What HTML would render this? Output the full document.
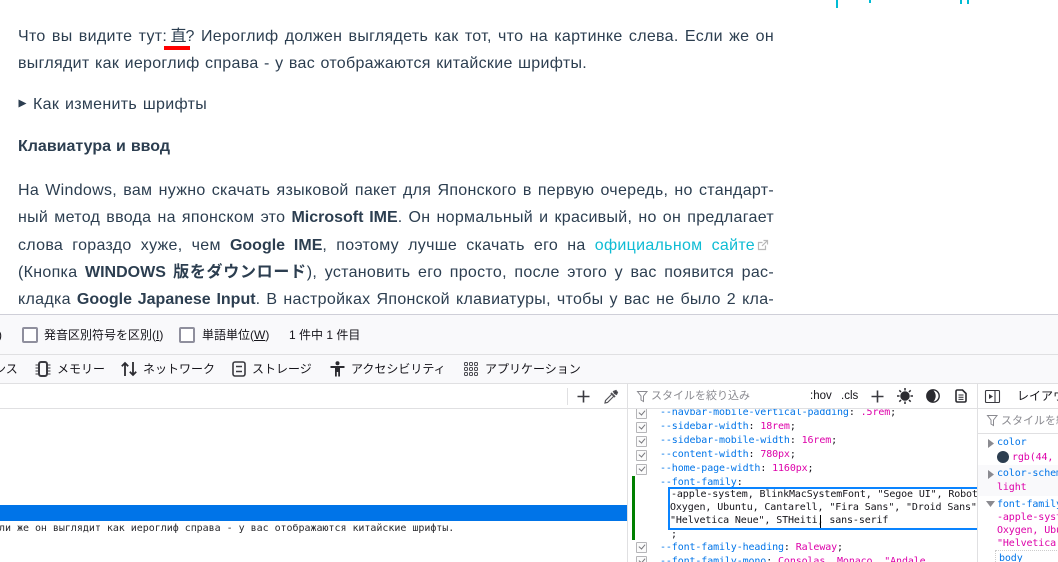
<!DOCTYPE html>
<html lang="ru"><head><meta charset="utf-8"><style>
html,body{margin:0;padding:0;background:#fff}
#p{position:relative;width:1058px;height:562px;overflow:hidden;background:#fff;font-family:"Liberation Sans","Noto Sans CJK JP",sans-serif}
.a{position:absolute;white-space:nowrap}
.l{position:absolute;left:18px;width:756px;height:26px;line-height:26px;font-size:16px;letter-spacing:.3px;color:#2c3e50;text-align:justify;text-align-last:justify;white-space:normal;font-family:"Liberation Sans","Noto Sans CJK JP",sans-serif}
.l b{font-weight:700;color:#2c3e50;letter-spacing:0}
.k{display:inline-block;line-height:0;letter-spacing:.7px;font-family:"Noto Sans CJK JP",sans-serif;text-align-last:left}
.u{font-size:12px;line-height:18px;height:18px;color:#15141a}
.f{font-size:11px;color:#8a8a90}
.m{font-family:"DejaVu Sans Mono",monospace;font-size:10px;letter-spacing:-.12px;line-height:14px;height:14px;color:#15141a}
.p{color:#0074e8}.v{color:#dd00a9}
.cb{position:absolute;left:636px;width:9px;height:9px;border:1px solid #b5b5b8;border-radius:1px;background:#fbfbfb}
.cb:after{content:"";position:absolute;left:3px;top:0;width:3px;height:5px;border:solid #77777c;border-width:0 1.3px 1.3px 0;transform:rotate(40deg)}
svg{position:absolute;overflow:visible}
</style></head><body><div id="p">

<div class="a" style="left:836px;top:0;width:2px;height:8px;background:#00bcd4"></div>
<div class="a" style="left:869px;top:0;width:2px;height:3px;background:#00bcd4"></div>
<div class="a" style="left:960px;top:0;width:2px;height:4px;background:#00bcd4"></div>
<div class="a" style="left:967px;top:0;width:2px;height:4px;background:#00bcd4"></div>

<div class="l" style="top:24px">Что вы видите тут: <span class="k" style="font-family:'Noto Sans CJK SC',sans-serif;letter-spacing:0;margin-left:-3px;margin-right:-1px">直</span>? Иероглиф должен выглядеть как тот, что на картинке слева. Если же он</div>
<div class="a" style="left:164px;top:46px;width:26px;height:4px;background:#f00"></div>
<div class="l" style="top:51px;width:569px">выглядит как иероглиф справа - у вас отображаются китайские шрифты.</div>
<svg style="left:18px;top:99px" width="9" height="9"><path d="M0.5 0.5L8.5 4.5L0.5 8.5Z" fill="#2c3e50"/></svg>
<div class="l" style="left:33px;top:92px;width:174px">Как изменить шрифты</div>
<div class="l" style="top:134px;width:152px;font-weight:700;letter-spacing:0">Клавиатура и ввод</div>
<div class="l" style="top:178px">На Windows, вам нужно скачать языковой пакет для Японского в первую очередь, но стандарт-</div>
<div class="l" style="top:205px">ный метод ввода на японском это <b>Microsoft IME</b>. Он нормальный и красивый, но он предлагает</div>
<div class="l" style="top:233px;width:737px">слова гораздо хуже, чем <b>Google IME</b>, поэтому лучше скачать его на <span style="color:#0fbcd4">официальном сайте</span></div>
<svg style="left:757px;top:239px" width="12" height="12" fill="none" stroke="#b8b8b8" stroke-width="1.2"><path d="M8.5 6.5V10.5H1.5V3.5H5.5M6.5 1.5H10.5V5.5M10.5 1.5L5 7"/></svg>
<div class="l" style="top:260px">(Кнопка <b>WINDOWS <span class="k">版をダウンロード</span></b>), установить его просто, после этого у вас появится рас-</div>
<div class="l" style="top:287px">кладка <b>Google Japanese Input</b>. В настройках Японской клавиатуры, чтобы у вас не было 2 кла-</div>

<div class="a" style="left:0;top:314px;width:1058px;height:70px;background:#f9f9fb"></div>
<div class="a" style="left:0;top:314px;width:1058px;height:1px;background:#cfcfd8"></div>
<div class="a" style="left:0;top:354px;width:1058px;height:1px;background:#e0e0e2"></div>
<div class="a" style="left:0;top:383px;width:1058px;height:1px;background:#e0e0e2"></div>
<div class="a" style="left:0;top:408px;width:977px;height:1px;background:#e0e0e2"></div>

<div class="a u" style="left:-2px;top:326px">)</div>
<div class="a" style="left:22px;top:327px;width:12px;height:12px;border:2px solid #8f8f9d;border-radius:2px;background:#fff"></div>
<div class="a u" style="left:44px;top:326px">発音区別符号を区別(<span style="text-decoration:underline">I</span>)</div>
<div class="a" style="left:179px;top:327px;width:12px;height:12px;border:2px solid #8f8f9d;border-radius:2px;background:#fff"></div>
<div class="a u" style="left:202px;top:326px">単語単位(<span style="text-decoration:underline">W</span>)</div>
<div class="a u" style="left:289px;top:326px">1 件中 1 件目</div>

<div class="a u" style="left:-6px;top:360px">ンス</div>
<svg style="left:35px;top:361px" width="16" height="16" fill="none" stroke="#3a3a40" stroke-width="2"><rect x="4" y="1" width="8" height="14" rx="2"/><path d="M0.5 4H3M0.5 7H3M0.5 10H3M0.5 13H3M13 4H15.5M13 7H15.5M13 10H15.5M13 13H15.5" stroke-width="1"/></svg>
<div class="a u" style="left:57px;top:360px">メモリー</div>
<svg style="left:121px;top:361px" width="16" height="16" fill="none" stroke="#2b2b30" stroke-width="1.8"><path d="M4 15V2M0.8 5.2L4 2L7.2 5.2M12 1V14M8.8 10.8L12 14L15.2 10.8"/></svg>
<div class="a u" style="left:143px;top:360px">ネットワーク</div>
<svg style="left:232px;top:361px" width="14" height="16" fill="none" stroke="#3a3a40" stroke-width="1.6"><rect x="1" y="1" width="12" height="14" rx="2"/><path d="M4 5.5H10M4 10.5H10"/></svg>
<div class="a u" style="left:252px;top:360px">ストレージ</div>
<svg style="left:330px;top:361px" width="15" height="16" fill="#2b2b30"><circle cx="7.5" cy="2.2" r="2"/><path d="M0.5 5H14.5V7H10V15.5H8.2V11H6.8V15.5H5V7H0.5Z"/></svg>
<div class="a u" style="left:351px;top:360px">アクセシビリティ</div>
<svg style="left:464px;top:362px" width="14" height="14" fill="none" stroke="#4a4a50" stroke-width="1"><rect x=".5" y=".5" width="3" height="3" rx="1"/><rect x="5.5" y=".5" width="3" height="3" rx="1"/><rect x="10.5" y=".5" width="3" height="3" rx="1"/><rect x=".5" y="5.5" width="3" height="3" rx="1"/><rect x="5.5" y="5.5" width="3" height="3" rx="1"/><rect x="10.5" y="5.5" width="3" height="3" rx="1"/><rect x=".5" y="10.5" width="3" height="3" rx="1"/><rect x="5.5" y="10.5" width="3" height="3" rx="1"/><rect x="10.5" y="10.5" width="3" height="3" rx="1"/></svg>
<div class="a u" style="left:485px;top:360px">アプリケーション</div>

<div class="a" style="left:567px;top:388px;width:1px;height:17px;background:#e0e0e2"></div>
<svg style="left:577px;top:390px" width="13" height="13" stroke="#3a3a40" stroke-width="1.6"><path d="M6.5 0.5V12.5M0.5 6.5H12.5"/></svg>
<svg style="left:604px;top:390px" width="14" height="14" fill="none" stroke="#55555a" stroke-width="1.2"><path d="M8 4L1.5 10.5L1 13L3.5 12.5L10 6"/><path d="M7 3L11 7" stroke-width="1.8"/><path d="M9.5 1.5L10.5 3.5L12.5 4.5L13.5 2.5L12 .5Z" fill="#3a3a40"/></svg>
<div class="a" style="left:627px;top:384px;width:1px;height:178px;background:#e0e0e2"></div>
<div class="a" style="left:977px;top:384px;width:1px;height:178px;background:#e0e0e2"></div>

<div class="a" style="left:630px;top:409px;width:347px;height:153px;overflow:hidden">
 <div class="a m" style="left:30px;top:-3px"><span class="p">--navbar-mobile-vertical-padding</span>: <span class="v">.5rem</span>;</div>
 <div class="a m" style="left:30px;top:11px"><span class="p">--sidebar-width</span>: <span class="v">18rem</span>;</div>
 <div class="a m" style="left:30px;top:25px"><span class="p">--sidebar-mobile-width</span>: <span class="v">16rem</span>;</div>
 <div class="a m" style="left:30px;top:39px"><span class="p">--content-width</span>: <span class="v">780px</span>;</div>
 <div class="a m" style="left:30px;top:53px"><span class="p">--home-page-width</span>: <span class="v">1160px</span>;</div>
 <div class="a m" style="left:30px;top:67px"><span class="p">--font-family</span>:</div>
 <div class="a m" style="left:41px;top:119px">;</div>
 <div class="a m" style="left:30px;top:132px"><span class="p">--font-family-heading</span>: <span class="v">Raleway</span>;</div>
 <div class="a m" style="left:30px;top:146px"><span class="p">--font-family-mono</span>: <span class="v">Consolas, Monaco, "Andale</span></div>
 <div class="a" style="left:2px;top:67px;width:3px;height:64px;background:#008000"></div>
 <div class="a" style="left:38px;top:78px;width:400px;height:39px;border:2px solid #0a84ff;background:#fff"></div>
 <div class="a m" style="left:41px;top:79px">-apple-system, BlinkMacSystemFont, "Segoe UI", Roboto,</div>
 <div class="a m" style="left:40px;top:92px">Oxygen, Ubuntu, Cantarell, "Fira Sans", "Droid Sans",</div>
 <div class="a m" style="left:40px;top:105px">"Helvetica Neue", STHeiti, sans-serif</div>
 <div class="a" style="left:190px;top:106px;width:1px;height:13px;background:#000"></div>
</div>
<div class="cb" style="top:408px"></div>
<div class="cb" style="top:422px"></div>
<div class="cb" style="top:436px"></div>
<div class="cb" style="top:450px"></div>
<div class="cb" style="top:464px"></div>
<div class="cb" style="top:542px"></div>
<div class="cb" style="top:556px"></div>
<div class="a" style="left:630px;top:384px;width:347px;height:24px;background:#fff"></div>
<div class="a" style="left:630px;top:408px;width:347px;height:1px;background:#e0e0e2"></div>
<svg style="left:637px;top:391px" width="11" height="12" fill="none" stroke="#8a8a90" stroke-width="1"><path d="M.5 .5H10L6.5 5V10.5L4 9V5Z"/></svg>
<div class="a u f" style="left:651px;top:387px">スタイルを絞り込み</div>
<div class="a u" style="left:810px;top:387px;font-size:11.5px">:hov</div>
<div class="a u" style="left:841px;top:387px;font-size:11.5px">.cls</div>
<svg style="left:871px;top:390px" width="13" height="13" stroke="#3a3a40" stroke-width="1.6"><path d="M6.5 0.5V12.5M0.5 6.5H12.5"/></svg>
<svg style="left:897px;top:388px" width="16" height="16" fill="#2b2b30" stroke="#2b2b30" stroke-width="1.5"><circle cx="8" cy="8" r="4"/><path d="M8 0V2.5M8 13.5V16M0 8H2.5M13.5 8H16M2.3 2.3L4 4M12 12L13.7 13.7M2.3 13.7L4 12M12 4L13.7 2.3"/></svg>
<svg style="left:926px;top:389px" width="14" height="14"><circle cx="7" cy="7" r="6.2" fill="none" stroke="#2b2b30" stroke-width="1.4"/><path d="M7 1A6 6 0 0 0 7 13A8 8 0 0 0 7 1Z" fill="#2b2b30"/></svg>
<svg style="left:955px;top:389px" width="12" height="14" fill="none" stroke="#2b2b30" stroke-width="1.6"><path d="M1 2.5Q1 1 2.5 1H7.5L11 4.5V11.5Q11 13 9.5 13H2.5Q1 13 1 11.5Z"/><path d="M3.5 6H8.5M3.5 8.2H8.5M3.5 10.4H8.5" stroke-width="1"/></svg>
<svg style="left:985px;top:390px" width="15" height="13" fill="none" stroke="#3a3a40" stroke-width="1.1"><rect x=".5" y=".5" width="14" height="12" rx="1"/><path d="M10 .5V12.5"/><path d="M4 4L8 6.5L4 9Z" fill="#3a3a40" stroke="none"/></svg>
<div class="a u" style="left:1017px;top:387px;font-size:12px">レイアウト</div>
<div class="a" style="left:978px;top:408px;width:80px;height:1px;background:#e0e0e2"></div>
<div class="a" style="left:978px;top:433px;width:80px;height:1px;background:#e0e0e2"></div>
<svg style="left:987px;top:415px" width="11" height="12" fill="none" stroke="#8a8a90" stroke-width="1"><path d="M.5 .5H10L6.5 5V10.5L4 9V5Z"/></svg>
<div class="a u f" style="left:1001px;top:412px">スタイルを絞り込み</div>

<div class="a" style="left:978px;top:465px;width:80px;height:31px;background:#f9f9fb"></div>
<div class="a" style="left:978px;top:434px;width:80px;height:128px;overflow:hidden">
 <svg style="left:10px;top:5px" width="6" height="9"><path d="M0 0L6 4.5L0 9Z" fill="#8a8a90"/></svg>
 <div class="a m" style="left:19px;top:2px"><span class="p">color</span></div>
 <div class="a" style="left:19px;top:17px;width:12px;height:12px;border-radius:50%;background:#2c3e50"></div>
 <div class="a m" style="left:34px;top:17px;color:#dd00a9">rgb(44, 62, 80)</div>
 <svg style="left:10px;top:36px" width="6" height="9"><path d="M0 0L6 4.5L0 9Z" fill="#8a8a90"/></svg>
 <div class="a m" style="left:19px;top:33px"><span class="p">color-scheme</span></div>
 <div class="a m" style="left:19px;top:47px;color:#dd00a9">light</div>
 <svg style="left:8px;top:67px" width="9" height="6"><path d="M0 0H9L4.5 6Z" fill="#8a8a90"/></svg>
 <div class="a m" style="left:19px;top:64px"><span class="p">font-family</span></div>
 <div class="a m" style="left:19px;top:77px;color:#dd00a9">-apple-system, Blink</div>
 <div class="a m" style="left:19px;top:90px;color:#dd00a9">Oxygen, Ubuntu</div>
 <div class="a m" style="left:19px;top:103px;color:#dd00a9">"Helvetica Neue"</div>
 <div class="a" style="left:17px;top:116px;width:70px;height:20px;border:1px dotted #ccc"></div>
 <div class="a m" style="left:21px;top:118px"><span class="p">body</span></div>
</div>

<div class="a" style="left:0;top:505px;width:627px;height:16px;background:#0074e8"></div>
<div class="a m" style="left:-1px;top:522px;letter-spacing:-.03px;color:#2a2a2e">ли же он выглядит как иероглиф справа - у вас отображаются китайские шрифты.</div>

</div></body></html>
